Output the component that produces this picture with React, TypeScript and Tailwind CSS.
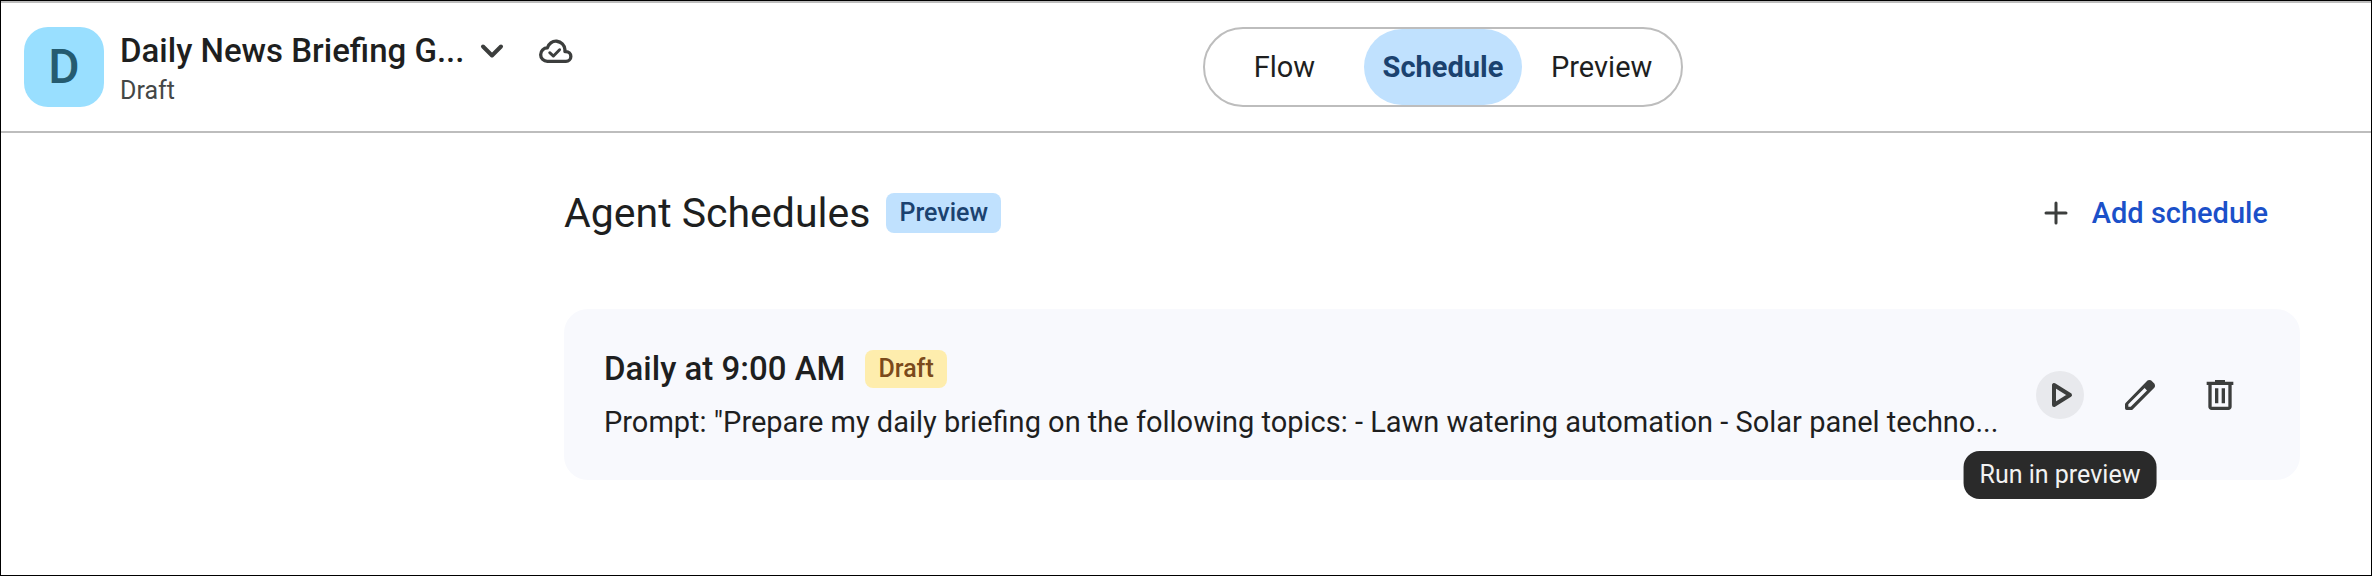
import React, { useState } from 'react';

type Tab = 'Flow' | 'Schedule' | 'Preview';

const TABS: Tab[] = ['Flow', 'Schedule', 'Preview'];

interface Schedule {
  id: string;
  title: string;
  status: string;
  prompt: string;
}

const SCHEDULES: Schedule[] = [
  {
    id: 'daily-9am',
    title: 'Daily at 9:00 AM',
    status: 'Draft',
    prompt:
      'Prompt: "Prepare my daily briefing on the following topics: - Lawn watering automation - Solar panel techno...',
  },
];

const ChevronIcon = () => (
  <svg width="24" height="24" viewBox="0 0 24 24" fill="none" stroke="currentColor" strokeWidth="4" strokeLinecap="round" strokeLinejoin="round">
    <path d="M3 7.5l9 9 9-9" />
  </svg>
);

const CloudDoneIcon = () => (
  <svg width="36" height="36" viewBox="0 -960 960 960" fill="none" stroke="currentColor" strokeLinecap="round" strokeLinejoin="round">
    <path strokeWidth="88" d="M250-204H745A131 131 0 0 0 745-466H718V-520A238 238 0 0 0 250-562A179 179 0 0 0 250-204Z" />
    <path strokeWidth="76" d="M312-436l100 92 164-172" />
  </svg>
);

const PlusIcon = () => (
  <svg width="32" height="32" viewBox="0 0 32 32" fill="none" stroke="currentColor" strokeWidth="3" strokeLinecap="round">
    <path d="M16 6v20M6 16h20" />
  </svg>
);

const PlayIcon = () => (
  <svg width="40" height="40" viewBox="0 0 40 40" fill="none" stroke="currentColor" strokeWidth="4" strokeLinejoin="round">
    <path d="M14 10v20l16-10Z" />
  </svg>
);

const EditIcon = () => (
  <svg width="40" height="40" viewBox="0 -960 960 960" fill="currentColor">
    <path d="M200-200h57l391-391-57-57-391 391v57Zm-40 80q-40 0-40-40v-97q0-18 14-33l514-527q12-11 26.500-17t30.500-6q16 0 31 6t26 18l55 56q12 11 17.500 26t5.500 30q0 16-5.500 30.500T817-647L304-134q-14 14-33 14H160Z" />
  </svg>
);

const DeleteIcon = () => (
  <svg width="40" height="40" viewBox="0 -960 960 960" fill="currentColor">
    <path d="M280-120q-33 0-56.500-23.500T200-200v-520h-40v-80h200v-40h240v40h200v80h-40v520q0 33-23.500 56.500T680-120H280Zm400-600H280v520h400v-520ZM360-280h80v-360h-80v360Zm160 0h80v-360h-80v360Z" />
  </svg>
);

const ScheduleCard: React.FC<{ schedule: Schedule }> = ({ schedule }) => (
  <li className="flex items-center rounded-3xl bg-[#f8f9fd] py-10 pl-10 pr-14">
    <div className="flex min-w-0 flex-1 flex-col gap-[15px]">
      <div className="flex items-center gap-5">
        <h2 className="text-[33px] leading-10 font-medium">{schedule.title}</h2>
        <span className="rounded-lg bg-[#feedad] px-[13px] text-[25px] leading-[38px] font-medium text-[#7b4a1b]">
          {schedule.status}
        </span>
      </div>
      <p className="text-[29px] leading-9 whitespace-nowrap">{schedule.prompt}</p>
    </div>
    <div className="flex gap-8 text-[#3c3e3d]">
      <div className="relative">
        <button
          type="button"
          aria-label="Run"
          aria-describedby={`run-tip-${schedule.id}`}
          className="flex size-12 items-center justify-center rounded-full bg-[#e8e9ed]"
        >
          <PlayIcon />
        </button>
        <div
          id={`run-tip-${schedule.id}`}
          role="tooltip"
          className="absolute top-full left-1/2 mt-8 -translate-x-1/2 rounded-2xl bg-[#2a2a2a] px-4 text-[25px] leading-[48px] whitespace-nowrap text-[#f2f2f2]"
        >
          Run in preview
        </div>
      </div>
      <button type="button" aria-label="Edit" className="flex size-12 items-center justify-center rounded-full">
        <EditIcon />
      </button>
      <button type="button" aria-label="Delete" className="flex size-12 items-center justify-center rounded-full">
        <DeleteIcon />
      </button>
    </div>
  </li>
);

export default function App() {
  const [tab, setTab] = useState<Tab>('Schedule');

  return (
    <div className="min-h-screen border border-black bg-white font-['Roboto',sans-serif] text-[#1e1f1f]">
      <header className="flex items-center border-y-2 border-[#bdbdbd] py-6">
        <div className="flex w-1/2 items-center gap-4 pl-[23px]">
          <div className="flex size-20 items-center justify-center rounded-3xl bg-[#99dfff] text-5xl font-medium text-[#255b70]">
            D
          </div>
          <div>
            <div className="flex items-center gap-[34px]">
              <button type="button" className="flex items-center gap-4 text-[33px] leading-[48px] font-medium">
                Daily News Briefing G...
                <span className="text-[#3c3e3d]">
                  <ChevronIcon />
                </span>
              </button>
              <span className="text-[#3c3e3d]" role="img" aria-label="Saved">
                <CloudDoneIcon />
              </span>
            </div>
            <p className="text-[25px] leading-8 text-[#444746]">Draft</p>
          </div>
        </div>

        <div className="w-1/2 pl-[17px]">
          <div role="tablist" className="flex h-20 w-[480px] rounded-full border-2 border-[#bdbdbd] text-[29px]">
            {TABS.map((t) => (
              <button
                key={t}
                type="button"
                role="tab"
                aria-selected={t === tab}
                onClick={() => setTab(t)}
                className={`flex-1 rounded-full pt-0.5 ${t === tab ? 'bg-[#c0e1fe] font-bold text-[#1b426f]' : ''}`}
              >
                {t}
              </button>
            ))}
          </div>
        </div>
      </header>

      <main className="pt-[60px] pr-[71px] pl-[563px]">
        <div className="flex items-center justify-between">
          <div className="flex items-center gap-4">
            <h1 className="text-[41px] leading-10">Agent Schedules</h1>
            <span className="rounded-lg bg-[#c0e1fe] px-[13px] text-[25px] leading-10 font-medium text-[#1b426f]">
              Preview
            </span>
          </div>
          <button type="button" className="flex items-center gap-5 pr-8 text-[29px] leading-10 font-medium text-[#1b50c9]">
            <span className="text-[#3c3e3d]">
              <PlusIcon />
            </span>
            Add schedule
          </button>
        </div>

        <ul className="mt-[76px] flex flex-col gap-6">
          {SCHEDULES.map((s) => (
            <ScheduleCard key={s.id} schedule={s} />
          ))}
        </ul>
      </main>
    </div>
  );
}
